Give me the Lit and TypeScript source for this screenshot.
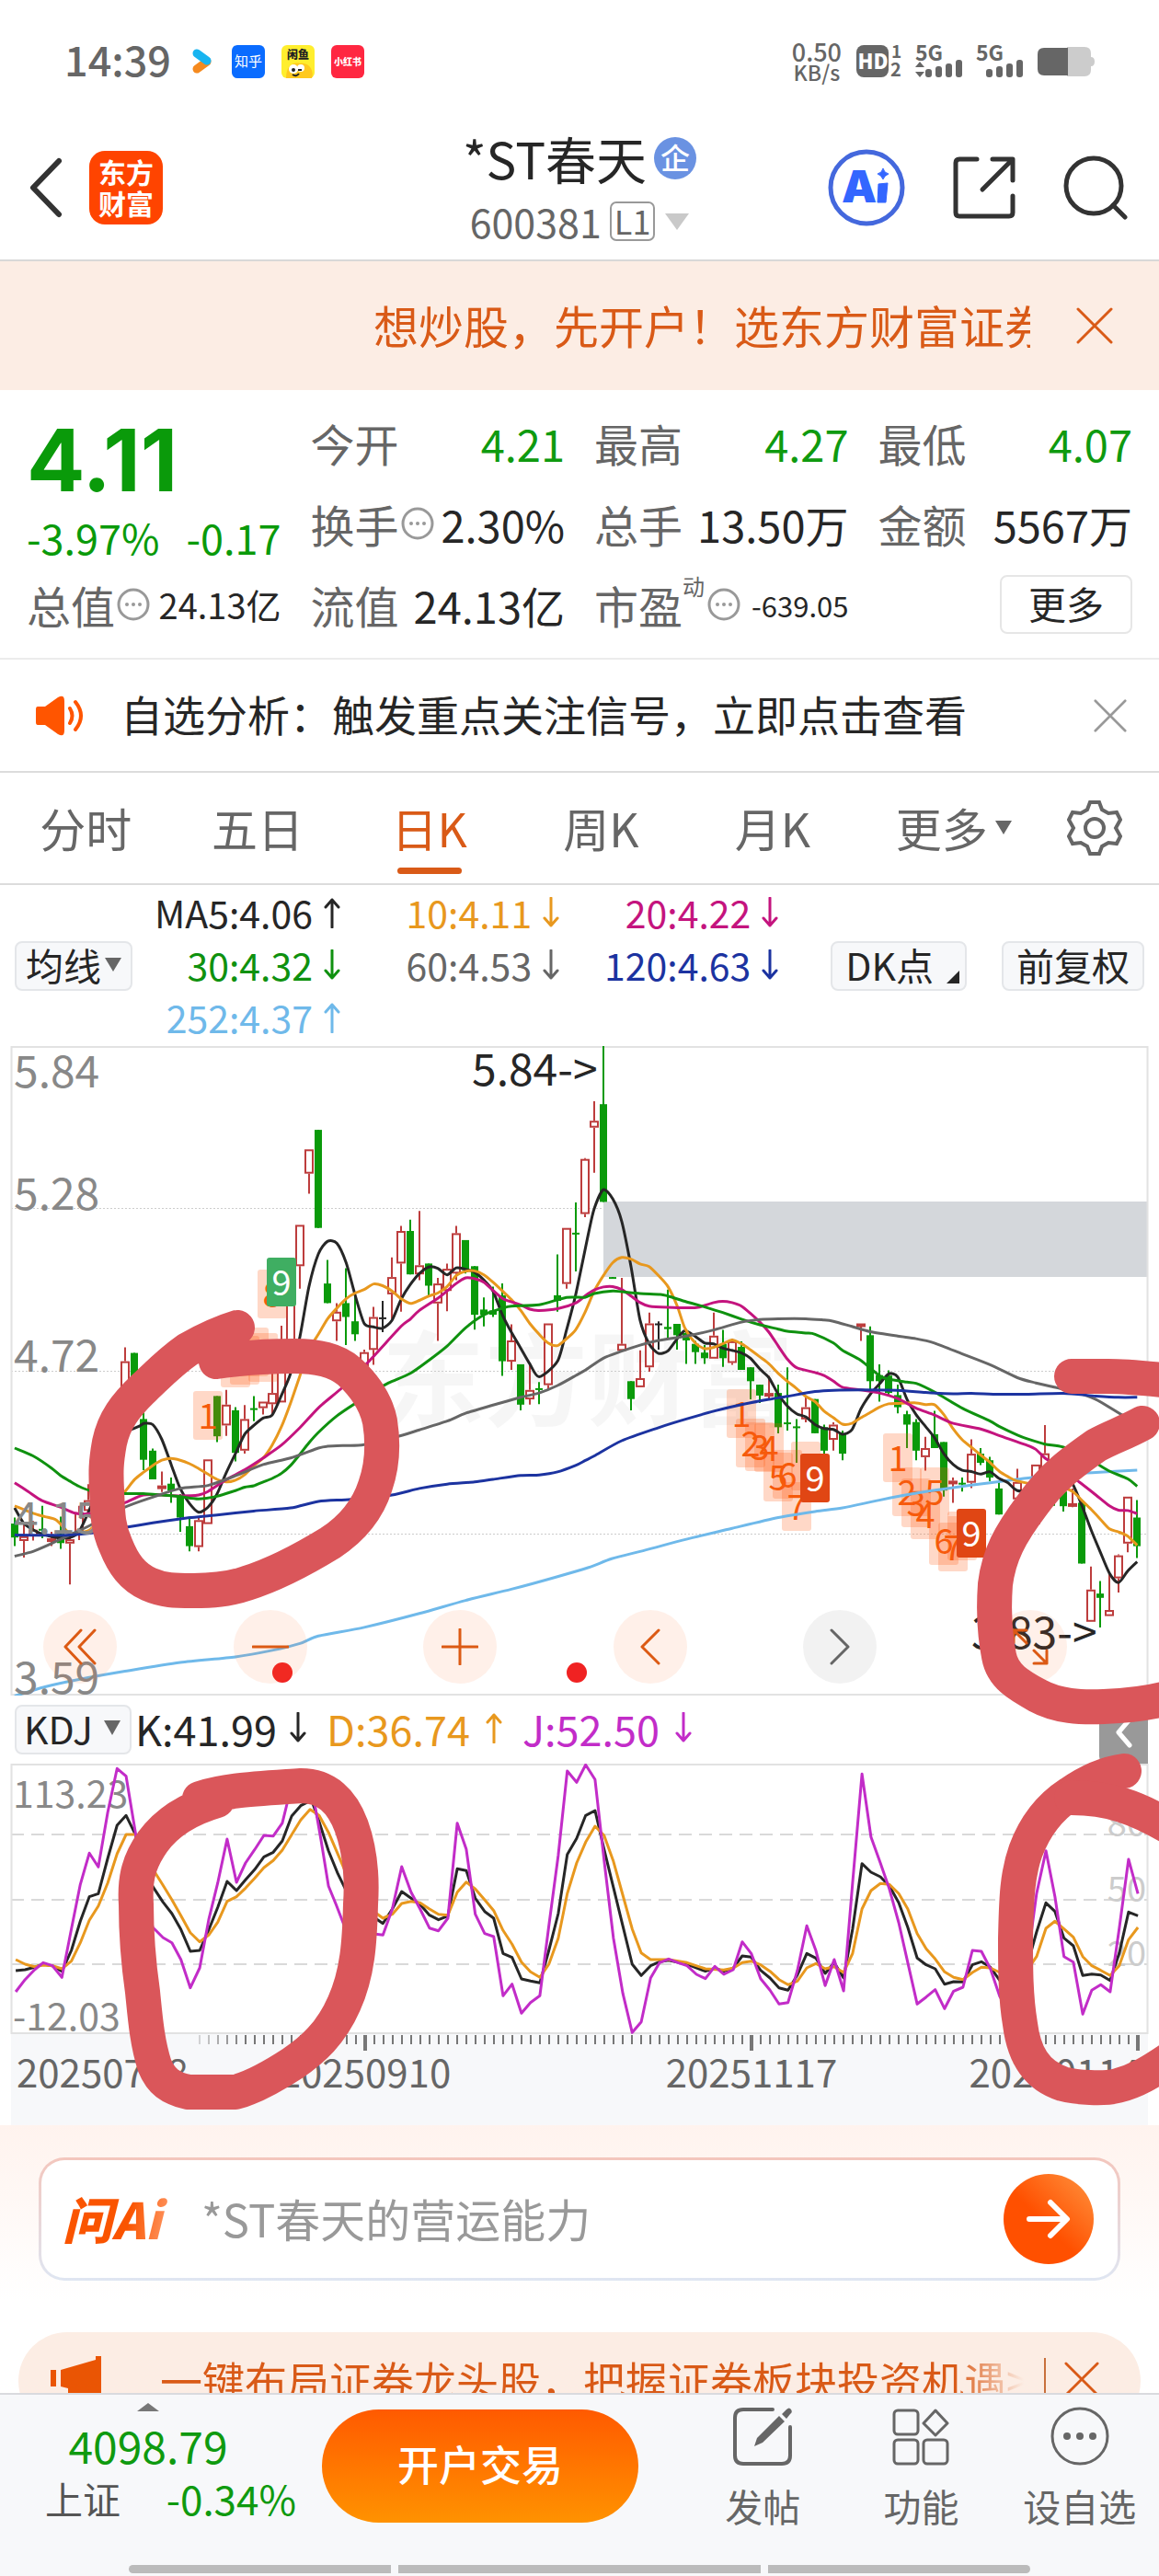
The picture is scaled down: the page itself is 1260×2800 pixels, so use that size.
import { LitElement, html, svg, css } from "lit";
import { customElement, property, state } from "lit/decorators.js";
import { classMap } from "lit/directives/class-map.js";

const FONT = css`"Noto Sans CJK SC", "Noto Sans", sans-serif`;

const C = {
  ink: "#262626",
  orange: "#e8981e",
  pink: "#c4147e",
  green: "#0f910f",
  gray: "#666666",
  blue: "#1c33a0",
  sky: "#6fb9ea",
  violet: "#c22cc8",
  up: "#bd3d3d",
  down: "#0a9a0a",
};

/* ---------- chart data ---------- */
/* Horizontal plot units: 24.5 per trading day, first day at 39.
   The second half of every series is counted from unit 1519. */
const HALF = 1519;
const px = (u: number) => Math.round((u / 2.45) * 10) / 10;
const dayX = (i: number) => 16 + i * 10;
const priceY = (u: number) => Math.round((1120 + u / 2.119) * 10) / 10;
const kdjY = (u: number) => Math.round((1840 + u / 3) * 10) / 10;

type Series = { color: string; a: number[]; b: number[] };

const points = (s: Series, y: (u: number) => number): [number, number][] => {
  const out: [number, number][] = [];
  for (let i = 0; i < s.a.length; i += 2) out.push([px(s.a[i]), y(s.a[i + 1])]);
  for (let i = 0; i < s.b.length; i += 2) out.push([px(s.b[i] + HALF), y(s.b[i + 1])]);
  return out;
};

const straight = (p: [number, number][]) => "M" + p.map((q) => q.join(",")).join("L");

const smooth = (p: [number, number][]) => {
  let d = `M${p[0].join(",")}`;
  for (let i = 0; i < p.length - 1; i++) {
    const p0 = p[i - 1] ?? p[i];
    const p1 = p[i];
    const p2 = p[i + 1];
    const p3 = p[i + 2] ?? p2;
    const k = 8;
    const f = (n: number) => n.toFixed(1);
    d += `C${f(p1[0] + (p2[0] - p0[0]) / k)},${f(p1[1] + (p2[1] - p0[1]) / k)} ${f(p2[0] - (p3[0] - p1[0]) / k)},${f(p2[1] - (p3[1] - p1[1]) / k)} ${p2[0]},${p2[1]}`;
  }
  return d;
};

/* day, kind (r hollow, g filled, k neutral), high, body top, body bottom, low */
type Candle = [number, "r" | "g" | "k", number, number, number, number];
const CANDLES: Candle[] = [
  [0, "g", 1122, 1136, 1168, 1188], [1, "r", 1136, 1165, 1176, 1214], [2, "r", 1130, 1150, 1165, 1175],
  [3, "g", 1095, 1148, 1152, 1170], [4, "r", 1155, 1170, 1176, 1188], [5, "g", 1120, 1160, 1181, 1194],
  [6, "r", 1168, 1172, 1182, 1276], [7, "r", 1095, 1110, 1160, 1174], [8, "r", 1045, 1082, 1107, 1118],
  [9, "r", 980, 1010, 1080, 1090], [10, "r", 920, 940, 1010, 1020], [11, "r", 850, 860, 940, 950],
  [12, "r", 730, 762, 822, 822], [13, "g", 743, 743, 830, 830], [14, "g", 880, 895, 989, 1013],
  [15, "g", 963, 968, 1034, 1034], [16, "r", 1016, 1048, 1056, 1063], [17, "g", 1030, 1044, 1060, 1088],
  [18, "g", 1068, 1072, 1122, 1155], [19, "g", 1120, 1142, 1188, 1200], [20, "r", 1120, 1128, 1190, 1200],
  [21, "r", 988, 988, 1137, 1137], [22, "g", 842, 842, 935, 948], [23, "r", 828, 862, 910, 934],
  [24, "g", 868, 875, 973, 993], [25, "r", 863, 895, 968, 975], [26, "g", 842, 870, 874, 900],
  [27, "r", 855, 855, 870, 885], [28, "r", 790, 835, 861, 885], [29, "r", 680, 770, 857, 857],
  [30, "r", 625, 625, 760, 760], [31, "r", 448, 448, 543, 595], [32, "r", 274, 274, 330, 376],
  [33, "g", 229, 229, 455, 455], [34, "g", 529, 583, 628, 628], [35, "r", 628, 648, 670, 715],
  [36, "g", 548, 628, 660, 725], [37, "g", 610, 670, 700, 715], [38, "r", 735, 741, 780, 780],
  [39, "r", 637, 660, 736, 770], [40, "k", 623, 661, 664, 695], [41, "r", 523, 568, 608, 665],
  [42, "r", 450, 462, 537, 648], [43, "g", 436, 462, 562, 562], [44, "r", 416, 541, 562, 575],
  [45, "g", 537, 537, 588, 612], [46, "r", 570, 583, 629, 715], [47, "r", 537, 549, 600, 647],
  [48, "r", 450, 467, 560, 575], [49, "g", 483, 483, 552, 560], [50, "g", 543, 543, 655, 689],
  [51, "g", 615, 643, 655, 682], [52, "g", 590, 645, 655, 660], [53, "g", 583, 610, 762, 796],
  [54, "r", 677, 714, 763, 782], [55, "g", 769, 769, 862, 875], [56, "r", 770, 828, 850, 862],
  [57, "g", 810, 824, 828, 861], [58, "r", 675, 675, 817, 828], [59, "g", 516, 610, 623, 648],
  [60, "r", 455, 455, 584, 595], [61, "g", 396, 466, 470, 555], [62, "r", 294, 296, 423, 430],
  [63, "r", 163, 208, 224, 328], [64, "g", 36, 170, 395, 395], [65, "g", 568, 568, 571, 571],
  [66, "r", 570, 722, 738, 738], [67, "g", 808, 808, 849, 875], [68, "r", 737, 801, 822, 822],
  [69, "r", 650, 675, 776, 786], [70, "k", 670, 675, 678, 735], [71, "g", 597, 683, 688, 710],
  [72, "g", 676, 676, 702, 735], [73, "g", 690, 697, 714, 768], [74, "g", 715, 722, 741, 768],
  [75, "g", 725, 742, 755, 768], [76, "r", 650, 703, 756, 756], [77, "g", 690, 722, 755, 775],
  [78, "r", 710, 716, 766, 770], [79, "g", 716, 729, 782, 782], [80, "g", 776, 776, 808, 850],
  [81, "g", 816, 816, 841, 858], [82, "r", 796, 835, 842, 850], [83, "g", 816, 835, 914, 928],
  [84, "g", 776, 903, 907, 922], [85, "g", 895, 912, 916, 996], [86, "r", 843, 868, 896, 903],
  [87, "g", 849, 849, 928, 928], [88, "g", 908, 914, 968, 980], [89, "r", 903, 908, 943, 968],
  [90, "g", 922, 928, 975, 990], [92, "r", 675, 675, 678, 715], [93, "g", 682, 702, 808, 828],
  [94, "g", 769, 794, 808, 855], [95, "g", 783, 795, 835, 840], [96, "g", 816, 840, 868, 882],
  [97, "g", 876, 884, 908, 962], [98, "g", 895, 902, 968, 990], [99, "r", 936, 962, 983, 1014],
  [100, "g", 876, 930, 962, 962], [101, "g", 948, 948, 1060, 1074], [102, "r", 1030, 1037, 1044, 1088],
  [103, "g", 1030, 1042, 1045, 1062], [104, "r", 942, 975, 1042, 1054], [105, "g", 962, 975, 996, 1001],
  [106, "g", 982, 990, 1030, 1038], [107, "g", 1040, 1055, 1115, 1115], [109, "r", 1010, 1040, 1080, 1100],
  [111, "r", 1000, 1000, 1137, 1137], [112, "r", 909, 974, 1010, 1060], [113, "g", 1060, 1070, 1080, 1095],
  [114, "g", 1055, 1062, 1096, 1108], [115, "r", 1055, 1089, 1096, 1098], [116, "g", 1080, 1088, 1228, 1228],
  [117, "r", 1235, 1288, 1362, 1362], [118, "g", 1268, 1297, 1307, 1375], [119, "r", 1252, 1335, 1349, 1349],
  [120, "r", 1207, 1209, 1262, 1295], [121, "r", 1074, 1074, 1182, 1202], [122, "g", 1082, 1122, 1188, 1215],
];

const AVERAGES: Series[] = [
  {
    color: C.sky,
    a: [39,1533,120,1512,210,1495,333,1476,480,1456,627,1443,725,1428,799,1412,848,1395,970,1375,1117,1343,1240,1313,1362,1287,1485,1258,1568,1237],
    b: [110,1217,200,1197,309,1172,431,1147,554,1122,652,1108,725,1100,823,1082,921,1066,1020,1053,1118,1042,1200,1033,1300,1023,1400,1018,1510,1013],
  },
  {
    color: C.ink,
    a: [39,1100,63,1135,88,1150,112,1160,150,1168,186,1168,210,1155,240,1100,290,990,330,930,370,912,385,905,407,908,431,942,456,1000,480,1055,505,1090,529,1110,554,1098,578,1068,602,1020,627,975,652,930,676,910,701,893,725,886,750,840,774,790,799,705,823,590,848,515,872,486,897,490,922,535,946,610,970,675,995,683,1019,686,1044,668,1068,620,1093,585,1117,560,1142,545,1166,548,1191,563,1215,547,1240,550,1264,557,1289,575,1313,600,1338,655,1362,695,1387,732,1411,768,1436,798,1485,762,1509,690,1533,610,1568,465],
    b: [64,410,88,367,113,388,137,440,162,545,186,668,210,722,235,744,260,738,285,710,305,692,333,705,358,720,382,722,406,732,431,737,456,743,480,755,505,780,529,800,554,838,578,865,603,883,627,890,652,908,676,917,701,919,725,930,750,920,774,872,799,838,823,815,848,791,872,798,897,850,921,885,946,912,970,938,995,975,1020,1000,1044,1013,1068,1016,1093,1022,1118,1017,1142,1032,1166,1042,1191,1060,1240,1060,1264,1040,1289,1030,1313,1030,1338,1045,1363,1095,1387,1150,1411,1200,1436,1250,1460,1272,1485,1245,1510,1224],
  },
  {
    color: C.orange,
    a: [39,1095,88,1112,120,1120,150,1128,186,1158,220,1155,240,1150,285,1110,333,1062,358,1035,382,1018,407,1002,431,990,456,986,480,990,505,998,529,1009,554,1022,578,1034,602,1040,627,1036,652,1023,676,1003,701,985,725,955,750,912,774,858,799,795,823,735,848,700,872,665,897,640,922,618,946,605,970,597,995,584,1019,588,1044,600,1068,618,1093,629,1117,622,1142,612,1166,605,1191,590,1215,565,1240,555,1264,554,1289,563,1313,580,1338,600,1362,620,1387,645,1411,675,1436,700,1460,720,1485,726,1509,710,1533,690,1558,650],
    b: [64,600,88,565,113,535,137,523,162,527,186,538,210,544,235,565,260,590,285,635,305,685,333,720,358,733,382,730,406,722,431,713,456,722,480,736,505,752,529,768,554,790,578,808,603,825,627,843,652,855,676,877,701,892,725,907,750,905,774,892,799,880,823,868,848,860,872,859,921,858,946,862,970,862,995,885,1020,918,1044,943,1068,960,1093,978,1118,995,1142,1015,1166,1028,1191,1038,1240,1045,1289,1045,1338,1062,1363,1083,1387,1103,1411,1125,1436,1148,1460,1155,1485,1165,1510,1186],
  },
  {
    color: C.pink,
    a: [39,1042,75,1062,112,1083,161,1098,200,1112,240,1113,285,1103,333,1088,382,1070,431,1070,480,1072,529,1070,554,1062,602,1035,652,1012,701,985,750,955,799,915,850,868,915,820,985,760,1068,682,1093,665,1117,645,1166,617,1191,600,1215,583,1240,570,1264,572,1289,580,1338,617,1387,632,1411,642,1436,645,1485,641,1533,628,1558,612],
    b: [64,598,88,591,113,590,137,597,162,612,186,627,210,635,260,638,309,639,340,638,382,627,406,624,431,627,456,635,480,652,505,672,529,695,554,727,578,757,603,777,652,788,676,795,701,808,725,822,774,828,823,835,872,848,921,870,970,886,1020,905,1093,918,1142,933,1215,955,1240,965,1264,985,1300,1005,1355,1040,1400,1070,1436,1095,1460,1105,1485,1106,1510,1113],
  },
  {
    color: C.green,
    a: [39,962,88,980,137,1008,161,1025,186,1038,210,1050,240,1060,285,1065,333,1067,382,1067,431,1070,480,1074,529,1079,578,1073,627,1060,652,1052,676,1049,701,1040,725,1032,750,1020,774,1002,799,976,823,950,848,926,897,888,950,857,1000,830,1035,812,1093,790,1142,760,1191,727,1240,685,1289,655,1338,640,1362,635,1436,632,1509,615,1558,615],
    b: [64,606,113,600,137,602,186,606,240,608,260,612,309,625,358,637,406,650,456,665,505,678,554,688,578,693,627,697,652,700,701,720,725,737,774,760,823,795,848,803,897,810,921,813,970,833,1044,870,1118,900,1142,912,1191,932,1215,940,1264,953,1313,960,1387,990,1436,1015,1485,1033,1510,1050],
  },
  {
    color: C.gray,
    a: [39,1211,88,1200,137,1182,186,1162,240,1140,333,1098,407,1075,480,1055,554,1048,627,1026,701,1000,774,985,848,962,872,958,922,956,970,954,1065,934,1117,920,1191,900,1240,882,1313,863,1387,845,1436,835,1485,818,1533,795,1558,783],
    b: [88,755,137,739,186,725,235,714,309,704,382,690,456,672,505,666,554,664,627,664,676,667,701,670,750,682,799,694,872,704,921,710,970,720,1044,745,1118,770,1191,800,1240,812,1295,823,1340,832,1400,850,1478,890,1510,895],
  },
  {
    color: C.blue,
    a: [39,1162,137,1163,186,1162,240,1158,333,1145,407,1134,480,1125,578,1116,676,1107,774,1100,848,1085,935,1080,1044,1070,1117,1055,1191,1045,1264,1040,1313,1034,1387,1025,1436,1024,1485,1017,1533,1002,1558,991],
    b: [64,980,137,945,235,915,309,895,382,877,456,862,529,850,578,843,652,832,701,829,774,828,872,829,946,834,1020,837,1068,836,1142,838,1215,838,1313,836,1400,842,1460,845,1510,845],
  },
];

const KDJ: Series[] = [
  {
    color: C.ink,
    a: [42,906,67,903,92,895,115,885,140,890,165,908,190,840,214,745,238,665,262,655,287,540,312,432,336,400,360,460,385,560,407,632,434,682,458,720,482,772,507,843,532,840,556,773,580,700,605,615,630,645,654,610,678,577,703,535,728,520,752,483,777,402,801,368,830,350,850,420,875,515,900,590,920,640,970,710,1020,752,1045,705,1070,648,1095,670,1119,690,1144,725,1168,740,1193,728,1218,574,1242,580,1266,670,1291,713,1315,735,1340,850,1364,863,1389,933,1413,940,1438,946,1462,840,1487,720,1511,527,1536,475,1560,400],
    b: [66,384,90,510,115,635,140,760,165,885,189,922,214,890,238,877,262,872,311,885,360,908,385,898,409,908,434,898,458,858,482,862,507,905,532,930,556,962,580,970,605,920,630,850,654,865,679,915,703,880,728,930,752,770,777,557,801,585,826,600,850,630,875,685,899,765,924,865,948,887,972,900,997,950,1021,942,1046,943,1071,887,1095,877,1119,895,1144,938,1193,910,1217,890,1242,780,1267,685,1291,713,1315,800,1340,825,1365,922,1389,917,1413,920,1438,938,1462,850,1487,715,1512,727],
  },
  {
    color: C.orange,
    a: [42,870,67,885,92,893,115,888,140,890,165,900,190,875,214,815,238,742,262,695,287,620,312,525,336,462,360,462,385,520,415,590,434,627,458,675,482,727,507,782,532,812,556,790,580,748,605,680,630,665,654,637,678,605,703,570,728,547,752,513,777,463,801,415,826,380,850,400,875,455,917,575,970,690,1020,735,1045,722,1070,687,1095,680,1119,685,1144,705,1168,722,1193,725,1218,650,1242,617,1266,640,1291,675,1315,710,1340,775,1364,820,1389,878,1413,910,1438,928,1462,885,1487,800,1511,655,1536,555,1560,487],
    b: [66,435,90,465,115,550,140,660,165,770,189,848,214,870,262,870,311,880,360,900,409,904,434,898,458,880,482,875,507,887,532,908,556,935,580,952,605,940,630,897,654,883,679,900,703,893,728,912,752,850,777,705,801,645,826,622,850,625,875,655,899,705,924,785,948,835,972,868,997,910,1021,928,1046,935,1071,912,1095,895,1119,897,1144,912,1193,905,1217,905,1242,860,1267,768,1291,745,1315,770,1340,797,1365,860,1389,890,1413,905,1438,922,1462,890,1487,805,1512,765],
  },
  {
    color: C.violet,
    a: [42,975,67,935,92,903,115,880,140,890,165,928,190,770,214,625,238,523,262,568,287,390,312,247,336,272,360,450,385,640,407,765,434,798,458,815,482,870,507,962,532,897,556,740,580,620,605,477,630,618,654,555,678,512,703,465,728,467,752,425,765,360,785,290,810,270,835,340,855,480,875,630,895,690,917,760,950,800,990,785,1020,790,1045,705,1070,567,1095,650,1119,705,1144,767,1168,776,1193,735,1218,425,1242,510,1266,722,1291,785,1315,795,1340,988,1364,950,1389,1045,1413,1010,1438,988,1462,760,1487,530,1511,255,1536,292,1560,235],
    b: [66,283,90,545,115,800,140,980,165,1108,189,1073,214,930,238,880,262,868,287,880,311,890,336,918,360,932,385,892,409,918,434,903,458,812,482,850,507,932,532,970,556,1015,580,1010,605,905,630,760,654,840,679,955,703,870,728,972,752,620,777,265,801,470,826,555,850,640,875,750,899,880,924,1015,948,992,972,968,997,1030,1021,973,1046,960,1071,840,1095,843,1119,900,1144,990,1168,1040,1193,930,1217,880,1242,655,1267,515,1291,665,1315,860,1340,878,1365,1048,1389,970,1413,952,1438,975,1462,770,1487,543,1512,655],
  },
];

/* left, top in page units, digit, style */
type Badge = [number, number, string, "soft" | "red" | "green"];
const BADGES: Badge[] = [
  [210, 1512, "1", "soft"], [240, 1455, "", "soft"], [250, 1452, "", "soft"], [260, 1443, "", "soft"],
  [270, 1449, "", "soft"], [280, 1380, "8", "soft"], [290, 1367, "9", "green"],
  [790, 1510, "1", "soft"], [800, 1542, "2", "soft"], [810, 1546, "3", "soft"], [820, 1547, "4", "soft"],
  [830, 1579, "5", "soft"], [840, 1576, "6", "soft"], [850, 1611, "7", "soft"], [860, 1567, "", "soft"],
  [870, 1580, "9", "red"],
  [960, 1558, "1", "soft"], [970, 1595, "2", "soft"], [980, 1607, "3", "soft"], [990, 1620, "4", "soft"],
  [1000, 1595, "5", "soft"], [1010, 1648, "6", "soft"], [1020, 1655, "7", "soft"], [1030, 1643, "", "soft"],
  [1040, 1640, "9", "red"],
];

/* ---------- icons ---------- */
const closeIcon = (size: number) => html`<svg class="stroke" width=${size} height=${size} viewBox="0 0 40 40"><path d="M2 2 38 38M38 2 2 38" /></svg>`;

const arrow = (dir: "up" | "down") => html`<svg class="arrow stroke" viewBox="0 0 18 34" width="18" height="34">
  ${dir === "up" ? svg`<path d="M9 33V3M2 11 9 3l7 8" />` : svg`<path d="M9 1v30M2 23l7 8 7-8" />`}
</svg>`;

const infoIcon = html`<svg class="info" width="36" height="36" viewBox="0 0 36 36">
  <circle cx="18" cy="18" r="16" fill="none" stroke="#999" stroke-width="3" />
  <g fill="#999"><circle cx="11" cy="18" r="2" /><circle cx="18" cy="18" r="2" /><circle cx="25" cy="18" r="2" /></g>
</svg>`;

const shared = css`
  * { box-sizing: border-box; }
  svg { display: block; flex: none; }
  button, input { font: inherit; color: inherit; margin: 0; padding: 0; border: 0; background: none; }
  .stroke { fill: none; stroke: currentColor; stroke-width: 3; stroke-linecap: round; stroke-linejoin: round; }
`;

/* ---------- candlestick + KDJ ---------- */
@customElement("stock-chart")
export class StockChart extends LitElement {
  static styles = [
    shared,
    css`
      :host { display: block; position: relative; font-family: ${FONT}; line-height: 1; color: #262626; }
      .plot { width: 100%; height: auto; }
      .price { position: relative; }
      .tools { position: absolute; left: 0; right: 0; bottom: 13px; padding: 0 100px 0 47px; display: flex; justify-content: space-between; }
      .tool { width: 80px; height: 80px; border-radius: 50%; background: rgba(255, 110, 40, 0.1); color: #dc5a14; display: grid; place-items: center; }
      .muted { background: rgba(0, 0, 0, 0.05); color: #666; }
      .bar { display: flex; align-items: center; height: 74px; padding: 0 12px 0 16px; font-size: 45px; }
      .pick { display: flex; align-items: center; justify-content: space-between; width: 127px; height: 54px; padding: 0 10px 4px 8px; border: 2px solid #e4e6e9; border-radius: 8px; background: #f7f8fa; font-size: 41px; }
      .pick i { border: 9px solid transparent; border-top: 16px solid #666; border-bottom: 0; }
      .val { display: flex; align-items: center; gap: 14px; margin: 0 18px 4px 4px; }
      .k { color: #262626; }
      .d { color: #e8981e; gap: 17px; }
      .j { color: #c22cc8; gap: 17px; }
      .fold { margin-left: auto; align-self: flex-end; width: 53px; height: 54px; border-radius: 8px 0 0 8px; background: #999; color: #fff; display: grid; place-items: center; padding-bottom: 14px; }
      .ink { position: absolute; inset: 0; width: 100%; height: 100%; pointer-events: none; }
      text { font-family: ${FONT}; }
    `,
  ];

  private candle([i, kind, hi, top, bot, lo]: Candle) {
    const x = dayX(i);
    const t = priceY(top);
    const b = priceY(bot);
    const h = Math.max(2, b - t);
    if (kind === "r") {
      return svg`<path d="M${x},${priceY(hi)}V${t}M${x},${b}V${priceY(lo)}" stroke=${C.up} stroke-width="2" />
        <rect x=${x - 4} y=${t + 1} width="8" height=${Math.max(2, h - 2)} fill="#fff" stroke=${C.up} stroke-width="2" />`;
    }
    const c = kind === "g" ? C.down : C.ink;
    return svg`<path d="M${x},${priceY(hi)}V${priceY(lo)}" stroke=${c} stroke-width="2" />
      <rect x=${x - 4} y=${t} width="8" height=${h} fill=${c} />`;
  }

  private badge([x, y, n, kind]: Badge) {
    const fill = kind === "soft" ? "rgba(255,90,20,.24)" : kind === "red" ? "#e04614" : "#3fae62";
    return svg`<rect x=${x} y=${y} width="32" height="53" rx="3" fill=${fill} />
      <text x=${x + 16} y=${y + 41} font-size="38" text-anchor="middle" fill=${kind === "soft" ? "#f55a0a" : "#fff"}>${n}</text>`;
  }

  private pricePlot() {
    const labels: [string, number][] = [["5.84", 1182], ["5.28", 1315], ["4.72", 1491], ["4.15", 1667], ["3.59", 1841]];
    return html`<svg class="plot" viewBox="0 1137 1260 706" role="img" aria-label="日K线图">
      <text x="415" y="1542" font-size="112" font-weight="700" fill="#000" opacity="0.03">东方财富</text>
      <g stroke="#ccc" stroke-width="1" stroke-dasharray="2 2">
        <path d="M12 1313.5H1247M12 1490.5H1247M12 1667.5H1247" />
      </g>
      <rect x="656" y="1306" width="591" height="82" fill="#d4d7db" />
      <rect x="12.5" y="1138" width="1235" height="704" fill="none" stroke="#e2e2e2" stroke-width="2" />
      ${CANDLES.map((c) => this.candle(c))}
      ${BADGES.map((b) => this.badge(b))}
      ${AVERAGES.map((s) => svg`<path d=${smooth(points(s, priceY))} fill="none" stroke=${s.color} stroke-width="3" stroke-linejoin="round" />`)}
      <g font-size="48" fill="#888">${labels.map(([t, y]) => svg`<text x="15" y=${y}>${t}</text>`)}</g>
      <g font-size="48" fill=${C.ink}>
        <text x="513" y="1180">5.84-&gt;</text>
        <text x="1056" y="1792">3.83-&gt;</text>
      </g>
      <g fill="#f02222"><circle cx="307" cy="1818" r="11" /><circle cx="627" cy="1818" r="11" /></g>
    </svg>`;
  }

  private kdjPlot() {
    const ticks = Array.from({ length: 103 }, (_, i) => i + 20);
    const major = [38, 80, 122];
    const levels: [string, number][] = [["80", 1994], ["50", 2065], ["20", 2135]];
    return html`<svg class="plot" viewBox="0 1917 1260 393" role="img" aria-label="KDJ">
      <rect x="12" y="2211" width="1236" height="99" fill="#f7f8fa" />
      ${levels.map(([t, y]) => svg`<path d="M12 ${y}H1247" stroke="#d9d9d9" stroke-width="2" stroke-dasharray="14 8" />
        <text x="1246" y=${y + 2} font-size="38" text-anchor="end" fill="#ccc">${t}</text>`)}
      <path d="M12.5 1918H1247.5V2210H12.5Z" fill="none" stroke="#e2e2e2" stroke-width="2" />
      <g font-size="41" fill="#888"><text x="14" y="1965">113.23</text><text x="14" y="2207">-12.03</text></g>
      ${KDJ.map((s) => svg`<path d=${straight(points(s, kdjY))} fill="none" stroke=${s.color} stroke-width="3" stroke-linejoin="round" />`)}
      ${ticks.map((i) => {
        const big = major.includes(i);
        return svg`<path d="M${dayX(i) + 1} 2212V${big ? 2229 : 2222}" stroke="#777" stroke-width=${big ? 4 : 2} opacity=${Math.min(1, (i - 18) / 7)} />`;
      })}
      <g font-size="42" fill="#666">
        <text x="18" y="2269">20250718</text>
        <text x="397" y="2269" text-anchor="middle">20250910</text>
        <text x="817" y="2269" text-anchor="middle">20251117</text>
        <text x="1240" y="2269" text-anchor="end">20260114</text>
      </g>
    </svg>`;
  }

  render() {
    return html`
      <div class="price">
        ${this.pricePlot()}
        <div class="tools">
          <button class="tool" aria-label="最左"><svg class="stroke" width="36" height="40" viewBox="0 0 36 40"><path d="M19 2 2 20 19 38M34 2 17 20 34 38" /></svg></button>
          <button class="tool" aria-label="缩小"><svg class="stroke" width="40" height="40" viewBox="0 0 40 40"><path d="M1 20H39" /></svg></button>
          <button class="tool" aria-label="放大"><svg class="stroke" width="40" height="40" viewBox="0 0 40 40"><path d="M1 20H39M20 1V39" /></svg></button>
          <button class="tool" aria-label="前移"><svg class="stroke" width="24" height="40" viewBox="0 0 24 40"><path d="M21 2 3 20 21 38" /></svg></button>
          <button class="tool muted" aria-label="后移"><svg class="stroke" width="24" height="40" viewBox="0 0 24 40"><path d="M3 2 21 20 3 38" /></svg></button>
          <button class="tool" aria-label="全屏"><svg class="stroke" width="40" height="40" viewBox="0 0 40 40"><path d="M2 16V2H16M2 2 16 16M38 24V38H24M38 38 24 24" /></svg></button>
        </div>
      </div>
      <div class="bar">
        <button class="pick">KDJ<i></i></button>
        <span class="val k">K:41.99 ${arrow("down")}</span>
        <span class="val d">D:36.74 ${arrow("up")}</span>
        <span class="val j">J:52.50 ${arrow("down")}</span>
        <button class="fold" aria-label="展开"><svg class="stroke" width="20" height="34" viewBox="0 0 20 34"><path stroke-width="5" d="M16 3 4 17 16 31" /></svg></button>
      </div>
      ${this.kdjPlot()}
      <svg class="ink" viewBox="0 1137 1260 1173" preserveAspectRatio="none" aria-hidden="true">
        <g fill="none" stroke="#da565a" stroke-width="38" stroke-linecap="round" stroke-linejoin="round">
          <path d="M258 1443C238 1449 222 1457 204 1467C184 1481 172 1494 157 1508C136 1528 124 1544 119 1568C115 1590 115 1600 116 1620C117 1645 117 1660 126 1680C134 1700 144 1714 162 1722C178 1729 190 1729 210 1729C230 1729 248 1728 268 1721C300 1711 328 1696 359 1677C385 1660 400 1640 408 1615C415 1595 417 1570 413 1545C409 1525 396 1506 380 1491C365 1478 345 1474 320 1474C290 1474 262 1476 235 1480" />
          <path d="M1165 1496H1205C1225 1496 1245 1498 1275 1501" />
          <path d="M1242 1547C1222 1558 1208 1562 1192 1571C1165 1590 1145 1604 1122 1636C1098 1668 1086 1690 1082 1722C1080 1750 1081 1775 1086 1800C1090 1822 1108 1832 1128 1843C1150 1855 1175 1856 1200 1855C1225 1854 1250 1852 1275 1844" />
          <path d="M217 1955C245 1946 270 1945 327 1941C355 1941 372 1958 382 1985C391 2010 394 2040 392 2070C391 2110 389 2145 374 2178C360 2210 340 2228 318 2243C295 2258 275 2269 256 2274H205C185 2270 175 2262 168 2245C160 2220 158 2195 155 2165C150 2130 148 2100 148 2070C146 2040 152 2022 166 2002C182 1980 205 1966 236 1957" />
          <path d="M1222 1925C1200 1928 1180 1938 1163 1950C1140 1965 1125 1985 1115 2012C1105 2040 1105 2070 1104 2107C1104 2140 1104 2170 1109 2200C1113 2232 1125 2255 1155 2265C1170 2269 1200 2271 1215 2267C1235 2262 1250 2253 1275 2236" />
          <path d="M1165 1954C1205 1954 1235 1964 1275 1988" />
        </g>
      </svg>
    `;
  }
}

/* ---------- one quote cell ---------- */
@customElement("quote-cell")
export class QuoteCell extends LitElement {
  @property() label = "";
  @property() value = "";
  @property() sup = "";
  @property() size: "l" | "m" | "s" = "l";
  @property({ type: Boolean }) info = false;
  @property({ type: Boolean }) fall = false;

  static styles = [
    shared,
    css`
      :host { display: flex; align-items: center; justify-content: space-between; font-size: 48px; line-height: 1; white-space: nowrap; }
      .label { display: flex; align-items: center; color: #666; }
      .info { margin-left: 2px; }
      .sup { font-size: 24px; align-self: flex-start; margin-top: -8px; }
      .sup + .info { margin-left: 3px; }
      .value { color: #262626; }
      .l { font-size: 47px; }
      .m { font-size: 38px; }
      .s { font-size: 31px; }
      .fall { color: #0f9a0f; }
    `,
  ];

  render() {
    return html`<span class="label">${this.label}${this.sup ? html`<span class="sup">${this.sup}</span>` : null}${this.info ? infoIcon : null}</span>
      <span class=${classMap({ value: true, [this.size]: true, fall: this.fall })}>${this.value}</span>`;
  }
}

/* ---------- page ---------- */
@customElement("app-root")
export class AppRoot extends LitElement {
  @state() private tab = "日K";
  @state() private question = "";

  static styles = [
    shared,
    css`
      :host { display: flex; flex-direction: column; height: 100vh; background: #fff; color: #262626; font-family: ${FONT}; line-height: 1; overflow: hidden; }
      .page { flex: 1; min-height: 0; overflow: hidden; }
      a { color: inherit; text-decoration: none; }

      .status { display: flex; justify-content: space-between; align-items: center; height: 124px; padding: 10px 70px 0 70px; color: #666; }
      .status div { display: flex; align-items: center; }
      .status svg { overflow: visible; }
      .clock { font-size: 45px; font-weight: 500; margin-right: 22px; padding-bottom: 8px; }
      .apps { gap: 18px; }
      .speed { font-size: 27px; line-height: 22px; font-weight: 500; text-align: center; margin-right: 4px; }
      .speed small { display: block; font-size: 23px; }
      .sys { gap: 12px; }

      .head { display: grid; grid-template-columns: 1fr auto 1fr; align-items: center; height: 160px; padding: 2px 34px 0 31px; border-bottom: 2px solid #d8d8d8; }
      .head-left { display: flex; align-items: center; gap: 29px; }
      .head-right { display: flex; align-items: center; justify-content: flex-end; gap: 52px; color: #333; }
      .brand { width: 80px; height: 80px; border-radius: 17px; background: #ff4400; color: #fff; font-size: 30px; line-height: 34px; font-weight: 700; display: grid; place-content: center; text-align: center; padding-bottom: 3px; }
      .title { display: flex; flex-direction: column; align-items: center; gap: 20px; padding: 0 0 2px 3px; }
      .title h1 { display: flex; align-items: center; gap: 8px; margin: 0; font-size: 55px; font-weight: 400; }
      .corp { width: 46px; height: 46px; border-radius: 50%; background: #6a92e2; color: #fff; font-size: 32px; font-weight: 500; display: grid; place-items: center; padding-bottom: 3px; }
      .code { display: flex; align-items: center; gap: 9px; font-size: 43px; color: #666; }
      .code b { font-weight: 400; font-size: 36px; line-height: 36px; padding: 0 3px 3px; border: 2px solid #999; border-radius: 7px; }
      .code i { margin-left: 2px; border: 13px solid transparent; border-top: 18px solid #c9c9c9; border-bottom: 0; }

      .banner { display: flex; align-items: center; justify-content: space-between; height: 140px; padding: 0 50px 0 406px; background: #fcede4; color: #d95a17; font-size: 49px; }
      .banner a { flex: 1; overflow: hidden; white-space: nowrap; margin-right: 50px; line-height: 64px; padding-bottom: 2px; }

      .quote { display: grid; grid-template-columns: repeat(4, 1fr); grid-auto-rows: 88px; column-gap: 32px; padding: 13px 29px 14px; border-bottom: 2px solid #ececec; }
      .last { grid-row: span 2; color: #0a9a0a; display: flex; flex-direction: column; justify-content: space-between; padding: 17px 0 7px; }
      .last strong { font-family: Inter, sans-serif; font-size: 94px; line-height: 92px; font-weight: 700; }
      .delta { display: flex; justify-content: space-between; font-size: 45px; }
      .more { justify-self: end; align-self: center; width: 144px; height: 64px; border: 2px solid #e6e6e6; border-radius: 8px; font-size: 41px; padding-bottom: 4px; }

      .notice { display: flex; align-items: center; height: 123px; padding: 0 35px 0 39px; border-bottom: 2px solid #dcdcdc; font-size: 46px; }
      .notice a { flex: 1; margin-left: 40px; padding-bottom: 6px; }
      .notice button { color: #999; }

      .tabs { display: grid; grid-template-columns: repeat(6, 4fr) 3fr; height: 122px; border-bottom: 2px solid #dcdcdc; font-size: 50px; color: #666; }
      .tab { display: flex; align-items: center; justify-content: center; gap: 8px; position: relative; padding-bottom: 2px; }
      .tab i { border: 9px solid transparent; border-top: 15px solid #666; border-bottom: 0; }
      .tab:has(i) { padding-left: 20px; }
      .on { color: #d95a17; }
      .on::after { content: ""; position: absolute; left: calc(50% - 35px); bottom: 10px; width: 70px; height: 7px; border-radius: 4px; background: #d95a17; }
      .gear { display: grid; place-items: center; }

      .ma { display: flex; align-items: center; height: 175px; padding: 0 16px; }
      .chip { display: flex; align-items: center; justify-content: center; gap: 4px; height: 54px; padding: 0 14px 3px; border: 2px solid #e4e6e9; border-radius: 8px; background: #f7f8fa; font-size: 41px; white-space: nowrap; }
      .chip:first-child { padding-left: 10px; padding-right: 10px; }
      .chip i { border: 9px solid transparent; border-top: 15px solid #666; border-bottom: 0; }
      .chip .fold { align-self: flex-end; margin: 0 -8px 3px 10px; border: 7px solid #262626; border-left-color: transparent; border-top-color: transparent; }
      .chip + .chip { margin-left: 38px; }
      .values { flex: 1; display: grid; grid-template-columns: 226px 1fr 1fr; grid-auto-rows: 57px; margin-right: 57px; padding-bottom: 2px; font-size: 41px; white-space: nowrap; }
      .values span { display: flex; align-items: center; justify-content: flex-end; gap: 12px; }
      .m5 { color: #262626; }
      .m10 { color: #e8981e; }
      .m20 { color: #c4147e; }
      .m30 { color: #0f910f; }
      .m60 { color: #666; }
      .m120 { color: #1c33a0; }
      .m252 { color: #6fb9ea; }

      .ask { padding: 35px 42px 56px; background: linear-gradient(#fff3ee, #fff 85%); }
      .ask form { display: flex; align-items: center; height: 134px; padding: 0 26px 0 21px; border: 3px solid transparent; border-radius: 28px; background: linear-gradient(#fff, #fff) padding-box, linear-gradient(#f3c6bd, #dfe6f2) border-box; }
      .ask label { padding: 0 12px 3px 2px; font-size: 54px; line-height: 64px; font-weight: 900; font-style: italic; color: transparent; background: linear-gradient(100deg, #fa5400 60%, #ffa273); background-clip: text; -webkit-background-clip: text; }
      .ask input { flex: 1; min-width: 0; margin-left: 32px; padding-bottom: 3px; font-size: 49px; outline: 0; }
      .ask input::placeholder { color: #999; opacity: 1; }
      .send { width: 98px; height: 98px; border-radius: 50%; color: #fff; display: grid; place-items: center; background: linear-gradient(45deg, #ff5000 45%, #ff9440); }

      .promo { display: flex; align-items: center; height: 106px; margin: 0 20px; padding: 0 45px 4px 34px; border-radius: 53px; background: #fcede4; color: #d95a17; font-size: 46px; }
      .promo a { flex: 1; margin-left: 64px; overflow: hidden; white-space: nowrap; line-height: 60px; color: transparent; background: linear-gradient(90deg, #d95a17 92%, #fcede4); background-clip: text; -webkit-background-clip: text; }
      .promo hr { width: 2px; height: 46px; margin: 0 20px 0 22px; border: 0; background: #c8703c; }

      .nav { display: flex; align-items: flex-start; padding-top: 9px; height: 187px; border-top: 2px solid #d9dade; background: #f7f8fa; }
      .index { display: flex; flex-direction: column; align-items: center; width: 322px; color: #0f9a0f; font-size: 48px; gap: 12px; }
      .index i { border: 12px solid transparent; border-bottom: 9px solid #777; border-top: 0; }
      .index p { display: flex; justify-content: space-between; align-items: center; width: 100%; margin: 0; padding-left: 49px; font-size: 44px; }
      .index em { font-style: normal; font-size: 41px; color: #555; }
      .open { width: 344px; height: 123px; margin: 7px 49px 0 28px; padding-bottom: 6px; border-radius: 62px; background: linear-gradient(#ff5a00, #ff9200); color: #fff; font-size: 45px; font-weight: 500; }
      .acts { flex: 1; display: flex; }
      .act { flex: 1; display: flex; flex-direction: column; align-items: center; gap: 23px; color: #666; font-size: 41px; padding-top: 4px; white-space: nowrap; }
      .home { display: flex; gap: 8px; height: 12px; padding: 0 140px 3px; background: #f7f8fa; }
      .home i { flex: 285; background: #bbb; }
      .home i:nth-child(2) { flex: 393; }
      .home i:first-child { border-radius: 5px 0 0 5px; }
      .home i:last-child { border-radius: 0 5px 5px 0; }
    `,
  ];

  private signal(active: boolean) {
    return html`<svg width="54" height="36" viewBox="0 0 54 36" fill="#666" aria-label="5G">
      <text x="0" y="17" font-size="23" font-weight="700">5G</text>
      ${active ? svg`<path d="M0 24 5 18 10 24ZM0 29H10L5 35Z" />` : null}
      <rect x="11" y="26" width="7" height="9" rx="3" /><rect x="22" y="23" width="7" height="12" rx="3" />
      <rect x="33" y="20" width="7" height="15" rx="3" /><rect x="44" y="16" width="7" height="19" rx="3" />
    </svg>`;
  }

  private statusBar() {
    return html`<div class="status">
      <div>
        <span class="clock">14:39</span>
        <div class="apps">
          <svg width="26" height="36" viewBox="0 0 26 36"><path d="M6 26 17 18" stroke="#f58a1f" stroke-width="9" stroke-linecap="round" /><path d="M6 9 17 17" stroke="#18b4f0" stroke-width="9" stroke-linecap="round" /></svg>
          <svg width="36" height="36" viewBox="0 0 36 36"><rect width="36" height="36" rx="6" fill="#0a6cff" /><text x="18" y="23" font-size="15" text-anchor="middle" fill="#fff">知乎</text></svg>
          <svg width="36" height="36" viewBox="0 0 36 36"><rect width="36" height="36" rx="6" fill="#ffee2e" /><path d="M5 36C5 22 13 18 20 20 30 18 36 28 33 36Z" fill="#ffc91f" /><text x="18" y="15" font-size="12" font-weight="900" text-anchor="middle" fill="#222">闲鱼</text><circle cx="13" cy="26" r="5" fill="#fff" /><circle cx="21" cy="25" r="4" fill="#fff" /><circle cx="13" cy="27" r="2" fill="#222" /><path d="M18 27h4M12 32q4 3 7-1" fill="none" stroke="#222" stroke-width="2" /></svg>
          <svg width="36" height="36" viewBox="0 0 36 36"><rect width="36" height="36" rx="6" fill="#ff2741" /><text x="18" y="22" font-size="10" font-weight="900" text-anchor="middle" fill="#fff">小红书</text></svg>
        </div>
      </div>
      <div class="sys">
        <span class="speed">0.50<small>KB/s</small></span>
        <svg width="52" height="36" viewBox="0 0 52 36" fill="#666"><rect width="35" height="35" rx="8" /><text x="18" y="26" font-size="22" font-weight="900" text-anchor="middle" fill="#fff">HD</text><text x="38" y="14" font-size="19" font-weight="700">1</text><text x="37" y="34" font-size="20" font-weight="700">2</text></svg>
        ${this.signal(true)} ${this.signal(false)}
        <svg width="63" height="32" viewBox="0 0 63 32"><path d="M33 0H52Q59 0 59 7V11Q63 11 63 16T59 21V25Q59 32 52 32H33Z" fill="#ccc" /><path d="M34 1V31H8Q1 31 1 24V8Q1 1 8 1Z" fill="#666" /></svg>
      </div>
    </div>`;
  }

  private header() {
    return html`<header class="head">
      <div class="head-left">
        <button aria-label="返回"><svg class="stroke" width="37" height="66" viewBox="0 0 37 66" color="#333"><path stroke-width="6" d="M33 4 5 33 33 62" /></svg></button>
        <a class="brand" href="#">东方<br />财富</a>
      </div>
      <div class="title">
        <h1>*ST春天<span class="corp">企</span></h1>
        <span class="code">600381<b>L1</b><i></i></span>
      </div>
      <div class="head-right">
        <button aria-label="Ai"><svg width="84" height="84" viewBox="0 0 84 84"><circle cx="42" cy="42" r="39" fill="none" stroke="#4468dd" stroke-width="5" /><g fill="#3366ff"><text x="15" y="58" font-family="Inter, sans-serif" font-size="48" font-weight="900">A</text><path d="M55 38 65 37 63 58 54 58ZM60 21Q61 26 66 27 61 29 60 33 58 28 54 27 59 26 60 21Z" stroke="#3366ff" stroke-linejoin="round" /></g></svg></button>
        <button aria-label="分享"><svg class="stroke" width="68" height="68" viewBox="0 0 68 68"><path stroke-width="5" d="M26 3H7Q3 3 3 7V61Q3 65 7 65H61Q65 65 65 61V43M43 3H65V26M64 4 32 36" /></svg></button>
        <button aria-label="搜索"><svg class="stroke" width="70" height="70" viewBox="0 0 70 70"><circle cx="33" cy="33" r="30" stroke-width="5" /><path stroke-width="5" d="M54 54 67 67" /></svg></button>
      </div>
    </header>`;
  }

  private tabBar() {
    return html`<nav class="tabs">
      ${["分时", "五日", "日K", "周K", "月K", "更多"].map(
        (t) => html`<button class=${classMap({ tab: true, on: t === this.tab })} @click=${() => (this.tab = t)}>${t}${t === "更多" ? html`<i></i>` : null}</button>`
      )}
      <button class="gear" aria-label="设置">
        <svg class="stroke" width="60" height="62" viewBox="0 0 60 62"><path stroke-width="4" stroke-linejoin="miter" d="M25 3H35L38 11 45 15 54 14 58 22 53 31 58 40 54 48 45 47 38 51 35 59H25L22 51 15 47 6 48 2 40 7 31 2 22 6 14 15 15 22 11Z" /><circle cx="30" cy="31" r="10" stroke-width="4" /></svg>
      </button>
    </nav>`;
  }

  private averages() {
    const rows: [string, string, "up" | "down"][] = [
      ["m5", "MA5:4.06", "up"], ["m10", "10:4.11", "down"], ["m20", "20:4.22", "down"],
      ["m30", "30:4.32", "down"], ["m60", "60:4.53", "down"], ["m120", "120:4.63", "down"],
      ["m252", "252:4.37", "up"],
    ];
    return html`<section class="ma">
      <button class="chip">均线<i></i></button>
      <div class="values">${rows.map(([c, t, d]) => html`<span class=${c}>${t}${arrow(d)}</span>`)}</div>
      <button class="chip">DK点<i class="fold"></i></button>
      <button class="chip">前复权</button>
    </section>`;
  }

  render() {
    return html`
      <main class="page">
        ${this.statusBar()} ${this.header()}
        <aside class="banner">
          <a href="#">想炒股，先开户！选东方财富证券</a>
          <button aria-label="关闭">${closeIcon(40)}</button>
        </aside>
        <section class="quote">
          <div class="last">
            <strong>4.11</strong>
            <span class="delta"><span>-3.97%</span><span>-0.17</span></span>
          </div>
          <quote-cell label="今开" value="4.21" fall></quote-cell>
          <quote-cell label="最高" value="4.27" fall></quote-cell>
          <quote-cell label="最低" value="4.07" fall></quote-cell>
          <quote-cell label="换手" value="2.30%" info></quote-cell>
          <quote-cell label="总手" value="13.50万"></quote-cell>
          <quote-cell label="金额" value="5567万"></quote-cell>
          <quote-cell label="总值" value="24.13亿" size="m" info></quote-cell>
          <quote-cell label="流值" value="24.13亿"></quote-cell>
          <quote-cell label="市盈" sup="动" value="-639.05" size="s" info></quote-cell>
          <button class="more">更多</button>
        </section>
        <aside class="notice">
          <svg width="52" height="44" viewBox="0 0 52 44"><path d="M2 12Q0 12 0 15V29Q0 32 2 32H10L24 42Q31 46 31 38V6Q31-2 24 2L10 12Z" fill="#ff5500" /><path d="M37 14Q42 22 37 30M43 7Q55 22 43 37" fill="none" stroke="#ff5500" stroke-width="4" stroke-linecap="round" /></svg>
          <a href="#">自选分析：触发重点关注信号，立即点击查看</a>
          <button aria-label="关闭">${closeIcon(36)}</button>
        </aside>
        ${this.tabBar()} ${this.averages()}
        <stock-chart></stock-chart>
        <section class="ask">
          <form @submit=${(e: Event) => e.preventDefault()}>
            <label for="q">问Ai</label>
            <input id="q" placeholder="*ST春天的营运能力" .value=${this.question} @input=${(e: InputEvent) => (this.question = (e.target as HTMLInputElement).value)} />
            <button class="send" aria-label="发送"><svg class="stroke" width="50" height="44" viewBox="0 0 50 44"><path stroke-width="6" d="M4 22H44M27 4 45 22 27 40" /></svg></button>
          </form>
        </section>
        <aside class="promo">
          <svg width="56" height="54" viewBox="0 0 56 54" fill="#ea5504"><path d="M1 17H7V35H1ZM12 17 50 6V2H56V52H50V46L40 43V52H20V37L12 35Z" /></svg>
          <a href="#">一键布局证券龙头股，把握证券板块投资机遇&gt;</a>
          <hr />
          <button aria-label="关闭">${closeIcon(38)}</button>
        </aside>
      </main>
      <nav class="nav">
        <a class="index" href="#"><i></i><span>4098.79</span><p><em>上证</em><span>-0.34%</span></p></a>
        <button class="open">开户交易</button>
        <div class="acts">
          <button class="act"><svg class="stroke" width="64" height="64" viewBox="0 0 64 64"><path stroke-width="4" d="M43 3H11Q2 3 2 12V53Q2 62 11 62H53Q62 62 62 53V22" /><path fill="currentColor" stroke="none" d="M23 43 26 34 50 10 56 16 32 39ZM53 8 58 3Q61 0 63 3 65 6 62 8L58 13Z" /></svg>发帖</button>
          <button class="act"><svg class="stroke" width="64" height="64" viewBox="0 0 64 64" stroke-width="4"><rect x="3" y="4" width="26" height="26" rx="4" /><rect x="3" y="36" width="26" height="26" rx="4" /><rect x="35" y="36" width="26" height="26" rx="4" /><path d="M48 4 61 18 48 31 35 18Z" /></svg>功能</button>
          <button class="act"><svg class="stroke" width="66" height="64" viewBox="0 0 66 64"><circle cx="33" cy="32" r="30" /><g fill="currentColor" stroke="none"><circle cx="19" cy="32" r="4" /><circle cx="33" cy="32" r="4" /><circle cx="47" cy="32" r="4" /></g></svg>设自选</button>
        </div>
      </nav>
      <div class="home"><i></i><i></i><i></i></div>
    `;
  }
}
